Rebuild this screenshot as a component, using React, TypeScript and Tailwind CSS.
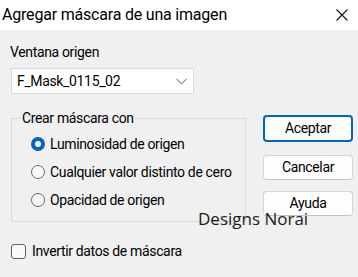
import React from "react";

const ui = { fontFamily: "Roboto, 'Liberation Sans', sans-serif" };

function Radio({ checked, label }: { checked?: boolean; label: string }) {
  return (
    <div className="flex h-[20px] items-center gap-[5px]">
      {checked ? (
        <span className="flex h-[14px] w-[14px] items-center justify-center rounded-full bg-[#0067c0]">
          <span className="h-[6px] w-[6px] rounded-full bg-white" />
        </span>
      ) : (
        <span className="h-[14px] w-[14px] rounded-full border border-[#6a6a6a] bg-[#f7f7f7]" />
      )}
      <span className="text-[14px] tracking-[-0.35px] text-black">{label}</span>
    </div>
  );
}

function Btn({ label, primary, h }: { label: string; primary?: boolean; h: string }) {
  return (
    <div
      className={
        "flex w-[90px] items-center justify-center rounded-[4px] bg-[#fdfdfd] text-[14px] tracking-[-0.35px] text-black " +
        h +
        (primary ? " border-2 border-[#0067c0]" : " border border-[#d4d4d4] border-b-[#c4c4c4]")
      }
    >
      {label}
    </div>
  );
}

export default function App() {
  return (
    <div className="relative h-[277px] w-[358px] overflow-hidden bg-[#f0f0f0]" style={ui}>
      <div className="flex h-[30px] items-center justify-between bg-white pl-[2px] pr-[10px]">
        <span className="text-[16px] tracking-[-0.2px] text-black">Agregar máscara de una imagen</span>
        <svg width="12" height="12" viewBox="0 0 12 12">
          <path d="M0.5 0.5 L11.5 11.5 M11.5 0.5 L0.5 11.5" stroke="#111" strokeWidth="1.1" />
        </svg>
      </div>
      <div className="flex pl-[11px]">
        <div className="flex w-[235px] flex-col">
          <div className="mt-[12px] -ml-[1px] h-[20px] text-[14px] leading-[20px] tracking-[-0.35px] text-black">
            Ventana origen
          </div>
          <div className="mt-[6px] flex h-[26px] w-[183px] items-center justify-between border border-[#dadada] bg-white pl-[5px] pr-[6px]">
            <span className="text-[14px] tracking-[-0.35px] text-black">F_Mask_0115_02</span>
            <svg width="11" height="7" viewBox="0 0 11 7">
              <path d="M0.5 0.8 L5.5 5.8 L10.5 0.8" fill="none" stroke="#8a8a8a" strokeWidth="1.1" />
            </svg>
          </div>
          <fieldset className="mt-[14px] border border-[#dcdcdc] pb-[11px]">
            <legend className="ml-[9px] px-[1px] text-[14px] leading-[20px] tracking-[-0.35px] text-black">
              Crear máscara con
            </legend>
            <div className="flex flex-col gap-[8px] pl-[19px] pt-[6px]">
              <Radio checked label="Luminosidad de origen" />
              <Radio label="Cualquier valor distinto de cero" />
              <Radio label="Opacidad de origen" />
            </div>
          </fieldset>
          <div className="mt-[19px] flex h-[20px] items-center gap-[6px]">
            <span className="h-[15px] w-[15px] rounded-[3px] border border-[#5f5f5f] bg-[#f9f9f9]" />
            <span className="text-[14px] tracking-[-0.35px] text-black">Invertir datos de máscara</span>
          </div>
        </div>
        <div className="ml-[17px] flex flex-col pt-[85px]">
          <Btn primary label="Aceptar" h="h-[27px]" />
          <div className="h-[13px]" />
          <Btn label="Cancelar" h="h-[25px]" />
          <div className="h-[11px]" />
          <Btn label="Ayuda" h="h-[25px]" />
        </div>
      </div>
      <div
        className="absolute left-[198px] top-[207px] text-[17px] leading-[24px] text-[#1a1a1a]"
        style={{ fontFamily: "'Open Sans', sans-serif" }}
      >
        Designs Norai
      </div>
    </div>
  );
}
